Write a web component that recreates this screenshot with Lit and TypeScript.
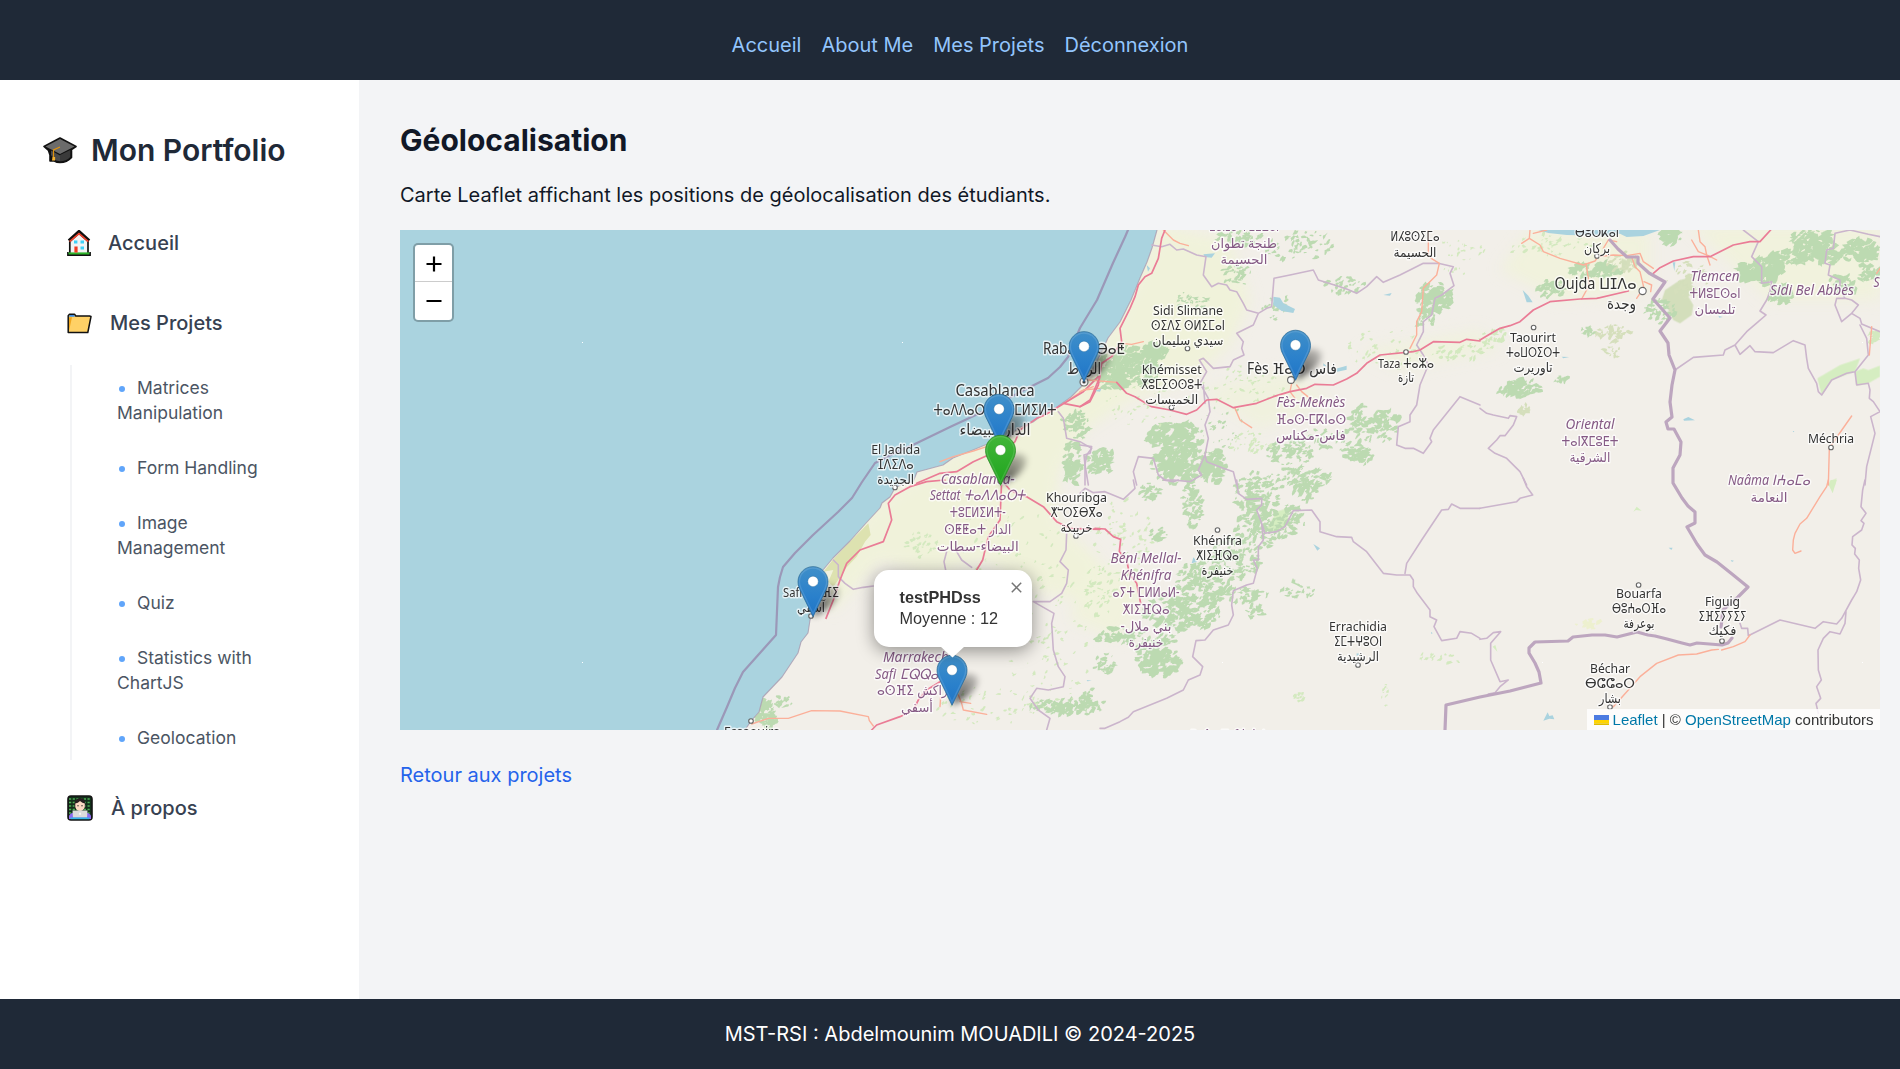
import { LitElement, html, svg, css } from "lit";
import { customElement } from "lit/decorators.js";

interface Tile {
  x: number;
  y: number;
  admin?: string;
  trunk?: string;
  motorway?: string;
  water?: string;
  park?: string;
  sand?: string;
  scrub?: string;
}

/* Vector data per map tile, three units to one map pixel. */
const TILES: Tile[] = [
  {
    x: 700, y: 225,
    admin: "M1075 560L1090 580 1100 640 1140 650 1175 670 1160 690 1155 720 1165 780",
    trunk: "M1200 490L1150 495 1100 530M860 665L820 678 760 695 720 710",
    motorway: "M1195 455L1150 500 1100 530 1035 570 1010 580 960 615 945 650 900 690 865 690 820 710 770 740 720 745 650 775M1200 450L1195 480 1170 530 1140 545 1090 535",
  },
  {
    x: 700, y: 480,
    admin: "M400 240L415 255 415 290 435 310 460 328 490 322 520 318M740 215L732 245 737 270M770 215L785 240 815 262M1100 160L1098 210 1080 245 1105 270 1100 310 1085 340 1050 365 1000 365M1000 365L1062 400 1055 430 1060 510 1075 560 1095 590 1090 620 1045 630 1010 625 990 655 1015 690 1050 715 1040 750",
    trunk: "M155 732L205 715 265 715 335 692 420 693 505 710 508 722 520 738M720 680L722 650M775 645L785 670 790 690 860 703M780 665L812 670",
    motorway: "M735 0L680 5 630 20 585 45 565 70 575 120 550 185 480 210 440 250 420 300 400 360 378 415M905 0L930 30 960 45 980 50 1030 80 1070 125 1110 145 1200 148M905 0L900 120 865 170 848 240 830 270M720 605L680 630 655 660 640 690 600 710 530 735 515 750",
    sand: "M505 130L512 165 495 185 470 230 440 262 425 285 400 320 385 305 400 270 370 275 400 238 440 195Z",
  },
  {
    x: 1080, y: 225,
    admin: "M215 60L245 65 270 58 290 75 310 72 350 90 378 95 370 150 395 185 415 175 440 180 450 195 470 200 490 235 500 255 535 265 560 250 575 245 582 160 630 150 700 135 715 165 780 185 800 192 830 205 860 185 890 155 910 172 960 150 1030 115 1075 115 1120 125 1110 145 1122 182 1085 210 1065 220 1055 270 1030 290 1030 320 1010 360 1030 390 1045 420 1020 480 1010 540 990 570 990 590 955 605 950 660 975 670 1000 670 1030 685 1055 650 1050 640 1060 615 1140 515 1200 540M535 265L520 300 470 325 490 350 485 370 492 390 460 405 450 425 400 430 370 400 358 405 380 440 360 475 385 520 390 560 375 600 385 640 375 690 380 710 430 730 460 740 470 780M0 660L35 665 30 685 12 690 15 720 15 780M170 780L160 740 175 695 220 700 235 750 255 765 280 765 330 770 365 750 355 735 375 690M370 480L375 535",
    trunk: "M250 15L280 45 300 55 325 62M125 355L155 358 190 350M25 465L110 472M1045 15L1045 95 1078 115 1070 150 1030 190 1025 260 1010 290 1010 330 990 370M635 475L630 500 645 520M650 480L665 500 720 545M465 550L480 585 515 608M0 500L40 485",
    motorway: "M255 15L245 40 235 100 215 145 195 155 175 180 165 215 150 250 120 310 125 350 95 395 65 415 58 460 30 525 0 545M110 472L140 505 165 515 215 545 270 555 320 568 350 555 365 540 380 525 410 523 460 548 530 535 580 515 630 500 680 490 705 478 760 480 800 462 830 445 860 415 900 390 1000 380 1020 375 1060 350 1140 352 1160 343 1200 348",
    water: "M580 215L600 218 610 235 645 252 640 264 605 258 580 240ZM765 432L800 422 800 434 772 440ZM370 88L405 85 395 98 375 96ZM910 210L935 204 930 212ZM45 498L65 490 60 500ZM200 120L210 130 204 140ZM730 415L742 425 730 422Z",
  },
  {
    x: 1080, y: 480,
    admin: "M0 40L15 25 40 38 75 35 130 58 165 25 160 0M470 0L475 40 500 58 545 55 545 75 530 90 545 130 555 160 590 155 615 140 640 92 695 90 720 125 720 155 770 170 815 172 820 185 860 215 910 280 950 285 990 285 1000 300 1000 320 1012 340 1050 390 1050 410 1070 420 1062 440 1085 482 1130 475 1140 455 1175 460 1200 475M975 280L980 250 1025 180 1085 90 1105 88 1115 72 1140 85 1200 85M545 130L550 180 535 200 535 240 520 240 532 265 520 310 500 315 460 332 455 375 460 405 445 435 400 450 375 480 348 482 338 530 368 560 360 585 325 600 310 630 260 655 160 695 145 712 120 725 75 745 60 745M250 0L280 5 295 0",
    motorway: "M45 145L75 147 100 170 122 178 118 215 140 240 145 265 150 285 170 310 182 370",
    water: "M340 232L352 245 335 250ZM700 192L720 205 712 212ZM20 600L35 602 22 604ZM830 520L842 522 830 528ZM1053 455L1058 460 1054 462Z",
    park: "M590 95L620 85 625 120 615 145 570 160 560 145Z",
  },
  {
    x: 1480, y: 225,
    admin: "M790 15L835 50 815 95 845 125 845 175 875 170 870 200 860 225 840 258 858 270 835 290 800 320 765 360 780 388 810 362 825 380 880 383 940 347 975 360 980 400 985 430 1010 475 1015 500 1025 510M765 360L735 375 730 390 640 397 585 435M1200 35L1165 28 1110 15 1065 25 1060 70 1040 75 1035 115 1050 120 1045 150 1080 165 1080 190 1095 220 1115 225 1135 240 1115 265 1085 290 1065 240 1070 220 1095 220M1115 265L1140 280 1145 297 1200 320M1140 300L1160 340 1165 390 1125 440 1130 480 1165 475 1170 495 1168 520 1180 530 1200 560 1172 575 1185 625 1160 725 1155 780M1025 510L1055 465 1100 445 1125 440M0 550L20 565 40 570 85 580 90 572 110 575 100 600 75 632 60 632 50 645 25 670 45 685 80 700 120 740 140 780",
    trunk: "M150 15L148 40 125 55M148 40L180 60 190 80 240 100 310 120 345 108 355 95 400 90 440 92 480 85 490 110 520 130M160 25L200 15M318 115L328 180 305 222M455 95L465 125 480 140 492 190M655 15L660 50 675 65 680 90 690 120M635 45L655 80 685 92 710 105M492 170L515 180 512 200M480 205L470 220M1175 305L1168 390M1200 130L1190 145M1115 573L1075 630 1048 670 1045 780M370 70L385 45 410 50",
    motorway: "M0 345L25 330 60 310 90 302 120 290 160 255 210 230 300 222 350 220 445 198M520 145L540 128 580 108 640 95 690 95 760 60 810 50 840 50 872 15",
    water: "M175 15L205 24 260 30 390 32 420 26 440 36 490 33 540 15ZM610 583L625 576 645 586 612 587ZM128 195L145 212 158 232 140 232ZM245 395L268 396 250 400ZM578 112L586 112 583 138ZM715 272L728 276 718 278ZM938 618L943 618 941 622Z",
    park: "M1012 460L1080 420 1140 400 1125 440 1055 465 1025 510ZM1125 440L1150 430 1165 435 1200 422 1200 455 1165 475 1130 482ZM1048 780L1050 768 1070 760 1065 780Z",
    scrub: "M555 195L600 165 640 155 630 175 650 195 625 215 640 240 635 270 600 295 580 285 560 245 545 225ZM425 100L450 110 445 135 425 135Z",
  },
  {
    x: 1480, y: 480,
    admin: "M130 -5L140 20 158 45 120 55 110 65 0 85M0 478L20 475 40 458 62 455 32 490 32 540 60 605 85 600 60 620 45 638 25 642M1155 0L1148 30 1143 80 1158 100 1143 122 1152 130 1145 150 1118 170 1116 195 1126 205 1124 222 1138 240 1136 265 1142 300 1130 335 1115 360 1085 415 1070 432 1030 425 1005 445 900 420 805 467 803 445 785 445 780 430M1098 395L1095 430 1080 462 1050 455 1030 475 1014 510 1015 570 1024 600 1010 620 1022 655 1008 670 1015 700",
    trunk: "M1045 0L1040 20 1020 50 980 115 960 132 945 160 940 180 938 210 945 220 963 213M810 465L795 485 760 500 725 510M715 508L695 510 650 522 595 525 530 550 480 590 445 630 400 680",
    water: "M190 722L203 697 208 708 218 706 223 718 208 716ZM566 203L578 203 574 210ZM752 240L762 242 756 246Z",
    park: "M1046 15L1052 0 1070 0 1058 40ZM460 95L470 80 485 92 468 90ZM38 500L46 495 52 515Z",
  },
];

const COAST =
  "M1157 230L1152 248 1147 262 1140 278 1131 300 1120 322 1108 338 1100 355 1091 373 1083 385 1071 397 1057 407 1045 413 1033 422 1018 428 1008 438 985 445 973 450 953 458 943 465 917 472 913 482 904 483 895 488 890 497 882 503 880 508 867 522 850 541 833 558 823 570 812 588 809 604 813 612 810 620 808 633 801 642 798 653 782 677 763 697 759 712 751 721 745 730";

const SEA_LIMIT =
  "M1128 230L1125 237 1113 263 1097 300 1080 328 1068 357 1060 367 1048 378 1030 387 1005 400 980 413 950 427 917 443 893 454 875 463 862 482 852 498 838 512 813 535 795 553 783 567 780 577 778 587 776 635 743 672 735 688 727 707 717 730";

const FRONTIER =
  "M1610 240L1618 249 1627 257 1638 257 1638 263 1649 273 1665 282 1653 299 1670 318 1660 331 1668 343 1669 355 1675 370 1672 385 1670 402 1672 417 1666 422 1668 429 1674 429 1681 442 1680 455 1673 468 1673 483 1682 498 1688 506 1695 512 1695 523 1687 527 1697 544 1705 555 1717 562 1732 574 1748 587 1738 597 1723 610 1721 627M1732 638L1728 643 1722 645 1697 643 1690 645 1682 643 1667 639 1655 636 1648 635 1637 632 1617 637 1605 635 1592 635 1573 637 1568 641 1535 642 1529 648 1529 653 1535 663 1539 672 1541 683 1510 691 1480 697 1446 705 1445 730";

type Cluster = [number, number, number, number, number, number, string];
const F = "#bcdab1";
const P = "#d3e9bf";
const S = "#d5dfbc";
/* cx, cy, rx, ry, count, size, colour */
const CLUSTERS: Cluster[] = [
  [1128, 368, 28, 18, 70, 5, F], [1112, 380, 14, 10, 20, 5, F], [1150, 352, 16, 8, 25, 5, F],
  [1242, 238, 22, 7, 20, 4, F], [1236, 275, 14, 9, 15, 3.5, F], [1192, 300, 14, 9, 12, 3, F],
  [1300, 246, 32, 14, 24, 3.5, F], [1345, 286, 18, 8, 14, 3.5, F], [1275, 305, 14, 14, 12, 2.5, F],
  [1434, 298, 16, 14, 34, 5, F], [1425, 318, 9, 9, 12, 4, F], [1460, 255, 22, 18, 12, 2.5, P],
  [1174, 438, 24, 14, 54, 5, F], [1180, 465, 26, 17, 66, 5, F], [1212, 466, 12, 16, 30, 5, F],
  [1101, 462, 14, 11, 26, 4.5, F], [1073, 463, 8, 20, 34, 4.5, F], [1076, 425, 12, 14, 22, 4, F],
  [1290, 452, 22, 12, 34, 3.5, F], [1372, 424, 24, 18, 40, 4.6, F], [1360, 455, 13, 9, 18, 4.5, F],
  [1330, 440, 34, 10, 20, 3.2, F], [1250, 442, 20, 10, 16, 2.6, P],
  [1300, 478, 28, 10, 40, 3.5, F], [1256, 497, 20, 22, 60, 3.6, F], [1305, 490, 12, 10, 22, 4, F],
  [1262, 528, 24, 18, 56, 3.6, F], [1292, 520, 12, 14, 20, 4, F], [1192, 505, 10, 20, 34, 3.6, F],
  [1150, 492, 9, 8, 14, 3.5, F], [1158, 535, 9, 6, 10, 3.5, F], [1236, 558, 22, 20, 50, 3.6, F],
  [1205, 582, 28, 19, 64, 4, F], [1182, 612, 36, 17, 76, 4.4, F], [1160, 655, 22, 20, 52, 5, F],
  [1120, 636, 24, 8, 26, 4, F], [1248, 595, 18, 7, 16, 4, F], [1255, 612, 8, 6, 9, 3.5, F],
  [1105, 664, 10, 10, 14, 3, F], [1090, 702, 12, 12, 16, 4, F], [1062, 706, 28, 7, 40, 4, F],
  [1295, 592, 18, 10, 9, 3, F], [1120, 540, 30, 40, 34, 2.8, P], [1100, 590, 16, 24, 22, 2.6, P],
  [766, 715, 8, 13, 22, 4.5, F], [783, 701, 9, 5, 10, 3, F], [920, 545, 18, 12, 14, 2.8, P],
  [1050, 640, 40, 60, 34, 2.6, P], [990, 705, 50, 18, 24, 2.6, P], [1010, 545, 60, 30, 26, 2.2, P],
  [1150, 405, 40, 20, 18, 2.4, P], [1240, 385, 40, 20, 24, 2.4, P], [1222, 425, 20, 22, 14, 2.2, F],
  [1390, 350, 40, 20, 22, 2.4, P], [1460, 352, 24, 8, 16, 3, P], [1493, 338, 12, 10, 14, 3.4, P],
  [1550, 245, 40, 10, 20, 2.6, P], [1597, 270, 24, 7, 38, 4, F], [1552, 288, 14, 7, 20, 4, F],
  [1622, 262, 14, 9, 18, 3.5, S], [1660, 310, 14, 12, 22, 3.5, F], [1690, 282, 22, 18, 22, 3.5, S],
  [1671, 235, 10, 7, 20, 5, F], [1762, 270, 19, 12, 36, 6, F], [1788, 258, 18, 6, 20, 4.5, F],
  [1812, 240, 20, 9, 34, 5, F], [1822, 254, 36, 8, 40, 5, F], [1862, 250, 16, 10, 30, 5, F],
  [1780, 295, 12, 8, 20, 5, F], [1845, 284, 16, 9, 20, 4.5, F], [1868, 272, 10, 8, 14, 4, F],
  [1519, 388, 20, 8, 26, 4.5, F], [1615, 333, 18, 8, 14, 3.6, S], [1590, 330, 8, 5, 8, 3, F],
  [1523, 410, 6, 5, 7, 4, S], [1612, 352, 8, 5, 6, 3, S], [1560, 380, 8, 4, 6, 3, F],
  [1440, 658, 24, 6, 8, 2.6, P], [1300, 697, 8, 4, 6, 3, P], [1385, 695, 3, 10, 5, 2, P],
  [1590, 624, 12, 4, 8, 3.4, "#edf0cf"], [1875, 337, 6, 4, 8, 4, P],
];

function speckle(clusters: Cluster[]) {
  let seed = 20241;
  const rnd = () => {
    seed = (seed * 1103515245 + 12345) % 2147483648;
    return seed / 2147483648;
  };
  return clusters.map(([cx, cy, rx, ry, n, size, fill]) => {
    let d = "";
    for (let i = 0; i < n * 2.1; i++) {
      const a = rnd() * Math.PI * 2;
      const r = Math.pow(rnd(), 0.62) * 1.12;
      const x = cx + Math.cos(a) * rx * r;
      const y = cy + Math.sin(a) * ry * r;
      const tilt = -0.5 + (rnd() - 0.5) * 1.6;
      const c = Math.cos(tilt);
      const s = Math.sin(tilt);
      const base = size * (0.3 + rnd() * 0.6);
      const k = 8;
      for (let j = 0; j < k; j++) {
        const t = (j / k) * Math.PI * 2;
        const q = base * (0.35 + rnd() * 0.95);
        const ux = Math.cos(t) * q * 1.45;
        const uy = Math.sin(t) * q * 0.75;
        d += `${j ? "L" : "M"}${(x + ux * c - uy * s).toFixed(1)} ${(y + ux * s + uy * c).toFixed(1)}`;
      }
      d += "Z";
    }
    return svg`<path d=${d} fill=${fill}/>`;
  });
}

/* centre x, baseline, width, text, kind: c city, t town, r italic region, rn upright region */
type Label = [number, number, number, string, string];
const LABELS: Label[] = [
  [1084, 354, 82, "Rabat ⵔⴱⴰⵟ", "c"], [1084, 374, 34, "الرباط", "c"],
  [995, 395.5, 79, "Casablanca", "c"], [995, 414.5, 123, "ⵜⴰⴷⴷⴰⵔⵜ ⵜⵓⵎⵍⵉⵍⵜ", "c"], [995, 434.5, 71, "الدار البيضاء", "c"],
  [895.7, 453.5, 49, "El Jadida", "t"], [895.7, 469, 36, "ⵊⴷⵉⴷⴰ", "t"], [895.7, 483.5, 37, "الجديدة", "t"],
  [977.7, 484, 74, "Casablanca-", "r"], [977.7, 500, 96, "Settat ⵜⴰⴷⴷⴰⵔⵜ", "r"], [977.7, 517, 56, "ⵜⵓⵎⵍⵉⵍⵜ-", "rn"],
  [977.7, 534, 67, "ⵙⵟⵟⴰⵜ الدار", "rn"], [977.7, 551, 82, "البيضاء-سطات", "rn"],
  [1076.5, 502, 61, "Khouribga", "t"], [1076.5, 517, 52, "ⵅⵯⵔⵉⴱⴳⴰ", "t"], [1076.5, 532, 32, "خريبكة", "t"],
  [811, 597, 56, "Safi ⴰⵙⴼⵉ", "t"], [811, 612, 28, "آسفي", "t"],
  [918, 662, 70, "Marrakech-", "r"], [918, 678.5, 86, "Safi ⵎⵕⵕⴰⴽⵛ-", "r"], [918, 695, 82, "ⴰⵙⴼⵉ مراكش-", "rn"], [917, 712, 32, "أسفي", "rn"],
  [752, 736, 56, "Essaouira", "t"],
  [1244, 231, 70, "ⵟⴰⵏⵊⴰ-ⵜⵉⵟⵡⴰⵏ", "rn"], [1244, 248, 66, "طنجة تطوان", "rn"], [1244, 264, 47, "الحسيمة", "rn"],
  [1415, 241, 49, "ⵍⵃⵓⵙⵉⵎⴰ", "t"], [1415, 257, 43, "الحسيمة", "t"],
  [1188, 314.5, 70, "Sidi Slimane", "t"], [1188, 329.5, 74, "ⵙⵉⴷⵉ ⵙⵍⵉⵎⴰⵏ", "t"], [1188, 344.5, 71, "سيدي سليمان", "t"],
  [1171.7, 373.5, 60, "Khémisset", "t"], [1171.7, 388.5, 61, "ⵅⵓⵎⵉⵙⵙⵓⵜ", "t"], [1171.7, 403.5, 53, "الخميسات", "t"],
  [1292, 374, 90, "Fès ⴼⴰⵙ فاس", "c"],
  [1311, 407, 69, "Fès-Meknès", "r"], [1311, 424, 70, "ⴼⴰⵙ-ⵎⴽⵏⴰⵙ", "rn"], [1311, 440, 70, "فاس-مكناس", "rn"],
  [1406, 367.5, 56, "Taza ⵜⴰⵣⴰ", "t"], [1406, 382, 16, "تازة", "t"],
  [1217.5, 545, 49, "Khénifra", "t"], [1217.5, 560, 43, "ⵅⵏⵉⴼⵕⴰ", "t"], [1217.5, 575, 32, "خنيفرة", "t"],
  [1146, 563, 71, "Béni Mellal-", "r"], [1146, 580, 51, "Khénifra", "r"], [1146, 597, 67, "ⴰⵢⵜ ⵎⵍⵍⴰⵍ-", "rn"],
  [1146, 614, 47, "ⵅⵏⵉⴼⵕⴰ", "rn"], [1146, 630.5, 51, "بني ملال-\u200f", "rn"], [1146, 647, 35, "خنيفرة", "rn"],
  [1358, 631, 58, "Errachidia", "t"], [1358, 646, 48, "ⵉⵎⵜⵖⵓⵔⵏ", "t"], [1358, 661, 42, "الرشيدية", "t"],
  [1227, 740, 76, "Drâa-Tafilalet", "r"],
  [1597, 237, 44, "ⴱⵓⵔⴽⴰⵏ", "t"], [1597, 253, 26, "بركان", "t"],
  [1595.5, 289, 82, "Oujda ⵡⵊⴷⴰ", "c"], [1621.5, 308.5, 29, "وجدة", "c"],
  [1533, 342, 46, "Taourirt", "t"], [1533, 357, 54, "ⵜⴰⵡⵔⵉⵔⵜ", "t"], [1533, 371.500, 39, "تاوريرت", "t"],
  [1715, 280.5, 49, "Tlemcen", "r"], [1715, 297.500, 51, "ⵜⵍⵓⵎⵙⴰⵏ", "rn"], [1715, 314, 41, "تلمسان", "rn"],
  [1812, 295, 84, "Sidi Bel Abbès", "r"], [1885, 287, 23, "Saïd", "r"],
  [1590, 429, 49, "Oriental", "r"], [1590, 446, 57, "ⵜⴰⵏⴳⵎⵓⴹⵜ", "rn"], [1590, 462, 41, "الشرقية", "rn"],
  [1831, 442.500, 46, "Méchria", "t"],
  [1769, 485, 82, "Naâma ⵏⵄⴰⵎⴰ", "r"], [1769, 501.500, 37, "النعامة", "rn"],
  [1639, 598, 46, "Bouarfa", "t"], [1639, 613, 54, "ⴱⵓⵄⴰⵔⴼⴰ", "t"], [1639, 628, 31, "بوعرفة", "t"],
  [1722.5, 606, 35, "Figuig", "t"], [1722.5, 621, 48, "ⵉⴼⵉⵢⵢⵉⵢ", "t"], [1722.5, 635, 28, "فكيك", "t"],
  [1610, 673, 40, "Béchar", "t"], [1610, 688, 50, "ⴱⵛⵛⴰⵔ", "t"], [1610, 702.500, 22, "بشار", "t"],
];

const TOWNS: [number, number, number][] = [
  [1084, 382, 4], [895, 487.5, 2.3], [1076, 536, 2.3], [811, 616, 2.3], [751, 721, 2.3], [1187.5, 348.5, 2.3],
  [1171.5, 407.5, 2.3], [1291, 380, 3.4], [1406, 352, 2.3], [1217.5, 530, 2.3], [1358, 665, 2.3], [1597, 256, 2.3],
  [1642.6, 291, 3.6], [1533.6, 327.5, 2.3], [1831, 447.5, 2.3], [1638.6, 585, 2.3], [1722, 641, 2.3], [1610, 707, 2.3],
];

/* x, y of the pin's tip */
const PINS: [number, number, boolean][] = [
  [1084, 382, false], [1295.5, 380.6, false], [999, 444.6, false], [1000.5, 485.6, true], [813, 617, false], [952, 705.6, false],
];

const SEAMS = [582, 902, 1222, 1542, 1862].flatMap((x) => [342, 662].map((y) => [x, y]));

@customElement("student-map")
class StudentMap extends LitElement {
  static styles = css`
    :host { display: block; position: relative; height: 500px; overflow: hidden; background: #aad3df;
      font-family: "Liberation Sans", Arial, sans-serif; }
    .canvas { display: block; width: 1480px; height: 500px; }
    .line { fill: none; stroke-linejoin: round; stroke-linecap: round; vector-effect: non-scaling-stroke; }
    .admin { stroke: #cbb5cc; stroke-width: 1.6px; }
    .trunk { stroke: #fbb09a; stroke-width: 1.4px; }
    .motorway { stroke: #ea7c96; stroke-width: 1.7px; }
    .label { font-family: "Noto Sans", "DejaVu Sans", sans-serif; text-anchor: middle; paint-order: stroke;
      stroke: rgba(255, 255, 255, 0.7); stroke-width: 3px; stroke-linejoin: round; fill: #333; }
    .c { font-size: 15.5px; }
    .t { font-size: 13.3px; }
    .r { font-size: 14px; font-style: italic; fill: #855a85; }
    .rn { font-size: 13.5px; fill: #855a85; }
    .zoom { position: absolute; left: 13px; top: 13px; width: 37px; border: 2px solid rgba(0, 0, 0, 0.25);
      border-radius: 5px; background-clip: padding-box; background-color: #fff; display: flex; flex-direction: column; }
    .zoom-btn { height: 38px; display: flex; align-items: center; justify-content: center; }
    .zoom-btn:first-child { height: 36px; padding-top: 1px; box-sizing: border-box; }
    .zoom-btn + .zoom-btn { border-top: 1px solid #ccc; }
    .popup { position: absolute; left: 473.500px; top: 339.5px; width: 158px; height: 77px; box-sizing: border-box;
      padding: 17.5px 26px; border-radius: 15px; background: #fff; color: #333; font-size: 16.25px; line-height: 21.1px;
      box-shadow: 0 4px 17px rgba(0, 0, 0, 0.4); white-space: nowrap; }
    .popup strong { display: block; }
    .tip { position: absolute; left: 66px; top: 76.500px; width: 25px; height: 12px; }
    .close { position: absolute; right: 10px; top: 12px; width: 11px; height: 11px; }
    .credit { position: absolute; right: 0; bottom: 0; height: 21px; padding: 0 6.5px; display: flex; align-items: center;
      gap: 4px; background: rgba(255, 255, 255, 0.8); color: #333; font-size: 15px; line-height: 21px; white-space: pre; }
    .credit a { color: #0078a8; }
    .flag { width: 15px; height: 10px; }
  `;

  private tile(t: Tile) {
    return svg`<g transform="translate(${t.x} ${t.y}) scale(0.33333)">
      <path d=${t.water ?? ""} fill="#aad3df"/>
      <path d=${t.admin ?? ""} class="line admin"/>
      <path d=${t.trunk ?? ""} class="line trunk"/>
      <path d=${t.motorway ?? ""} class="line motorway"/>
    </g>`;
  }

  private ground(t: Tile) {
    return svg`<g transform="translate(${t.x} ${t.y}) scale(0.33333)">
      <path d=${t.park ?? ""} fill="#d5edc1"/>
      <path d=${t.sand ?? ""} fill="#dde2b0"/>
      <path d=${t.scrub ?? ""} fill="#d3debb"/>
    </g>`;
  }

  private pin([x, y, green]: [number, number, boolean]) {
    return svg`<g transform="translate(${x - 15.6} ${y - 51}) scale(1.25)">
      <path d="M12.5 .5C5.9 .5 .5 5.9 .5 12.6c0 3.1 1 5.6 2.6 8.5L12.5 40.6l9.4-19.5c1.6-2.9 2.6-5.4 2.6-8.5C24.5 5.9 19.1 .5 12.5 .5Z"
        fill=${green ? "url(#pinGreen)" : "url(#pinBlue)"} stroke=${green ? "#2c8a25" : "#2e6c97"} stroke-opacity="0.75" stroke-width="0.8"/>
      <path d="M12.5 1.6C6.5 1.6 1.6 6.5 1.6 12.6c0 2.8 1 5.2 2.5 8L12.5 38l8.4-17.4c1.5-2.8 2.5-5.2 2.5-8C23.4 6.5 18.5 1.6 12.5 1.6Z"
        fill="none" stroke="#fff" stroke-opacity="0.12" stroke-width="1.1"/>
      <circle cx="12.5" cy="12.3" r="4.2" fill="#fff" stroke=${green ? "#2c8a25" : "#2e6c97"} stroke-opacity="0.5" stroke-width="0.6"/>
    </g>`;
  }

  render() {
    return html`
      <svg class="canvas" viewBox="400 230 1480 500">
        <defs>
          <linearGradient id="pinBlue" x1="0" y1="0" x2="0" y2="1">
            <stop offset="0" stop-color="#3f8fc9"/><stop offset="0.6" stop-color="#2a80cb"/><stop offset="1" stop-color="#1f74c6"/>
          </linearGradient>
          <linearGradient id="pinGreen" x1="0" y1="0" x2="0" y2="1">
            <stop offset="0" stop-color="#42b53a"/><stop offset="1" stop-color="#1ea51c"/>
          </linearGradient>
          <linearGradient id="cast" x1="0" y1="1" x2="0.8" y2="0">
            <stop offset="0" stop-color="#000" stop-opacity="0.75"/><stop offset="1" stop-color="#000" stop-opacity="0.2"/>
          </linearGradient>
          <clipPath id="land"><path d="${COAST}L1880 730 1880 230Z"/></clipPath>
          <filter id="wash" x="-20%" y="-20%" width="140%" height="140%"><feGaussianBlur stdDeviation="7"/></filter>
          <filter id="soft"><feGaussianBlur stdDeviation="0.6"/></filter>
          <filter id="shade" x="-50%" y="-50%" width="200%" height="200%"><feGaussianBlur stdDeviation="3"/></filter>
        </defs>
        <rect x="400" y="230" width="1480" height="500" fill="#aad3df"/>
        <path d="${COAST}L1880 730 1880 230Z" fill="#f2efe9"/>
        <g clip-path="url(#land)">
          <g filter="url(#wash)" fill="#f0f2da">
            <path d="M1160 225L1230 240 1250 300 1230 345 1190 380 1130 400 1085 430 1060 470 1055 520 1100 560 1085 600 1030 590 985 560 930 575 880 560 835 610 812 600 830 555 880 500 960 450 1090 370Z"/>
            <path d="M1085 560L1150 580 1120 640 1070 620Z" opacity="0.8"/>
            <path d="M1200 390L1290 370 1330 400 1260 430Z" opacity="0.7"/>
            <path d="M1530 230L1650 230 1650 290 1560 300 1500 270Z" opacity="0.8"/>
            <path d="M1690 225L1880 225 1880 300 1770 300Z" opacity="0.8"/>
            <path d="M1360 350L1480 330 1500 350 1400 370Z" opacity="0.7"/>
          </g>
          <g filter="url(#soft)">
            ${TILES.map((t) => this.ground(t))}
            ${speckle(CLUSTERS)}
          </g>
        </g>
        <path d=${COAST} class="line" stroke="#a99bb0" stroke-width="1.1" opacity="0.8"/>
        <path d=${SEA_LIMIT} class="line" stroke="#9b98b8" stroke-width="2.2"/>
        ${TILES.map((t) => this.tile(t))}
        <path d=${FRONTIER} class="line" stroke="#bda6bf" stroke-width="3.2"/>
        ${TOWNS.map(([x, y, r]) => svg`<circle cx=${x} cy=${y} r=${r} fill="#fff" stroke="#666" stroke-width="1.1"/>`)}
        <circle cx="1084" cy="382" r="1.6" fill="#444"/>
        ${LABELS.map(([x, y, w, text, kind]) => svg`<text x=${x} y=${y} textLength=${w} lengthAdjust="spacingAndGlyphs" class="label ${kind}">${text}</text>`)}
        ${SEAMS.map(([x, y]) => svg`<rect x=${x} y=${y} width="1" height="1" fill="#fff"/>`)}
        ${PINS.map(([x, y]) => svg`<path d="M${x} ${y}L${x + 7} ${y - 26}Q${x + 16} ${y - 36} ${x + 25} ${y - 29}Q${x + 29} ${y - 20} ${x + 14} ${y - 8}Z" fill="url(#cast)" filter="url(#shade)"/>`)}
        ${PINS.map((p) => this.pin(p))}
      </svg>
      <div class="zoom">
        <div class="zoom-btn"><svg width="16" height="16" viewBox="0 0 16 16"><path d="M8 .5v15M.5 8h15" stroke="#000" stroke-width="2.2"/></svg></div>
        <div class="zoom-btn"><svg width="16" height="16" viewBox="0 0 16 16"><path d="M.5 8h15" stroke="#000" stroke-width="2"/></svg></div>
      </div>
      <div class="popup">
        <strong>testPHDss</strong>Moyenne : 12
        <svg class="close" viewBox="0 0 11 11"><path d="M.8 .8l9.4 9.4M10.2 .8L.8 10.2" stroke="#757575" stroke-width="1.5"/></svg>
        <svg class="tip" viewBox="0 0 25 12"><path d="M0 0h25L12.5 11.5Z" fill="#fff"/></svg>
      </div>
      <div class="credit"><svg class="flag" viewBox="0 0 15 10"><path fill="#4C7BE1" d="M0 0h15v5H0z"/><path fill="#FFD500" d="M0 5h15v3.4H0z"/><path fill="#E0BC00" d="M0 8.4h15V10H0z"/></svg><span><a>Leaflet</a> | © <a>OpenStreetMap</a> contributors</span></div>
    `;
  }
}

const capIcon = html`<svg class="cap" viewBox="0 0 34 27">
  <path d="M17 1L33 9.5 28.5 12.5V20.5Q24 25.5 17 25.5 13.5 25.5 11.5 24H7V18L5.5 13.5 1 9.5Z" fill="#111" stroke="#111" stroke-width="1.6" stroke-linejoin="round"/>
  <path d="M8 13.5L17 18.5V24.3Q12.5 24 11 22.3L8 18Z" fill="#4a4a4a"/><path d="M17 18L27.3 13V20Q23 24.3 17 24.3Z" fill="#3a3a3a"/>
  <path d="M17 2L31.5 9.5 17 17 2.5 9.5Z" fill="#6b6b6b"/>
  <path d="M17 10L10.5 13V21" fill="none" stroke="#e0920c" stroke-width="1.2"/><path d="M9.5 20h2.6v3.4H9z" fill="#f5b02e"/></svg>`;
const homeIcon = html`<svg class="home" viewBox="0 0 24 26">
  <path d="M2.8 10.5V24H21V10.5L12 2.5Z" fill="#f3f3f3" stroke="#111" stroke-width="1.7"/>
  <path d="M2 10.8L12 1.8 22 10.8" fill="none" stroke="#111" stroke-width="3.6"/><path d="M2.6 11.6L12 3.6 21.4 11.6" fill="none" stroke="#f0442e" stroke-width="1.7"/>
  <path d="M.8 22.4h22.4V25.2H.8z" fill="#2fb42a"/><path d="M.8 22V25.200H23.200V22" fill="none" stroke="#111" stroke-width="1.4"/>
  <path d="M7.4 16.5h3.2v6H7.4z" fill="#f23a22"/><path d="M7 10.4h3.4v3H7zM13.5 10.4H17v3h-3.5zM13.5 16.4H17v3.2h-3.5z" fill="#3fd0f7"/></svg>`;
const folderIcon = html`<svg class="folder" viewBox="0 0 25 21">
  <path d="M1.2 19.5V2.8L2.5 1.2H7.5L8.8 3H22.5L24 3.5 20.8 19.5Z" fill="#ffd166" stroke="#111" stroke-width="1.5" stroke-linejoin="round"/>
  <path d="M2.2 3L3 2H7L8 3.8H2.2Z" fill="#3b8ee8"/><path d="M2 4.2H5L2 18Z" fill="#f0a51c"/></svg>`;
const coderIcon = html`<svg class="coder" viewBox="0 0 26 26">
  <rect x="1" y="1" width="24" height="24" rx="3" fill="#12301a" stroke="#151515" stroke-width="1.6"/>
  <path d="M2 4h22M2 7.5h22M2 11h22M2 14.5h22M2 18h22" stroke="#4fae55" stroke-width="1.5" stroke-dasharray="2.2 1.5"/>
  <path d="M2 24V20.5Q4 17.5 8 17.5H18Q22 17.5 24 20.5V24Z" fill="#8f6cf0"/>
  <path d="M7.5 8Q8 3.5 13.5 3 18.5 3.5 18.5 9V13H7.5Z" fill="#262020"/>
  <path d="M8.3 8.5Q11 8 13 6 15.5 8.3 17.8 8.5V12Q16.5 16 13 16 9.5 16 8.3 12Z" fill="#fbd9c2"/>
  <circle cx="11" cy="10.8" r=".7" fill="#333"/><circle cx="15" cy="10.8" r=".7" fill="#333"/>
  <path d="M5.5 15.5H20.5L20 22.5H6Z" fill="#dcdcdc"/><path d="M12 17.8h2v2h-2z" fill="#f6f6f6"/><path d="M3.5 22.5H22.5V24.2H3.5Z" fill="#35b8e8"/></svg>`;

@customElement("app-root")
class AppRoot extends LitElement {
  static styles = css`
    :host { display: grid; grid-template: 80px 919px 70px / 359px 1fr; height: 1069px;
      font-family: Inter, sans-serif; font-size: 20px; line-height: 30px; color: #111827; background: #f3f4f6; }
    .top { grid-column: 1 / 3; background: #1f2937; display: flex; justify-content: center; align-items: center;
      gap: 20px; padding: 10px 0 0 20px; box-sizing: border-box; color: #93c5fd; }
    .side { background: #fff; padding: 49px 0 0 43px; }
    .brand { display: flex; align-items: center; height: 42px; gap: 14px; color: #1f2937; font-size: 30px; font-weight: 600; white-space: nowrap; }
    .cap { width: 34px; height: 27px; }
    .menu { margin-top: 42px; padding-left: 24px; display: flex; flex-direction: column; }
    .entry { display: flex; align-items: center; height: 60px; font-weight: 500; color: #374151; }
    .entry + .entry { margin-top: 20px; }
    .home { width: 24px; height: 26px; margin-right: 17px; }
    .folder { width: 25px; height: 21px; margin-right: 18px; }
    .coder { width: 26px; height: 26px; margin-right: 18px; }
    .sub { margin: 12px 0 18px 3px; padding: 0 0 0 45px; border-left: 2px solid #f3f4f6; list-style: none;
      display: flex; flex-direction: column; gap: 10px; font-size: 17.5px; line-height: 25px; color: #4b5563; }
    .sub li { width: 155px; padding: 10px 0; }
    .dot { display: inline-block; width: 6px; height: 6px; margin: 0 12px 2px 2px; border-radius: 50%; background: #60a5fa; }
    .main { padding: 40px 20px 0 41px; }
    .title { margin: 0; font-size: 30px; line-height: 40px; font-weight: 700; }
    .lead { margin: 20px 0; }
    .back { display: block; margin-top: 30px; color: #2563eb; }
    .foot { grid-column: 1 / 3; background: #1f2937; color: #fff; display: flex; justify-content: center; align-items: center; padding-left: 20px; }
  `;

  private items = ["Matrices Manipulation", "Form Handling", "Image Management", "Quiz", "Statistics with ChartJS", "Geolocation"];

  render() {
    return html`
      <nav class="top"><a>Accueil</a><a>About Me</a><a>Mes Projets</a><a>Déconnexion</a></nav>
      <aside class="side">
        <div class="brand">${capIcon}<span>Mon Portfolio</span></div>
        <div class="menu">
          <div class="entry">${homeIcon}<span>Accueil</span></div>
          <div class="entry">${folderIcon}<span>Mes Projets</span></div>
          <ul class="sub">${this.items.map((i) => html`<li><span class="dot"></span>${i}</li>`)}</ul>
          <div class="entry">${coderIcon}<span>À propos</span></div>
        </div>
      </aside>
      <main class="main">
        <h1 class="title">Géolocalisation</h1>
        <p class="lead">Carte Leaflet affichant les positions de géolocalisation des étudiants.</p>
        <student-map></student-map>
        <a class="back">Retour aux projets</a>
      </main>
      <footer class="foot">MST-RSI : Abdelmounim MOUADILI © 2024-2025</footer>
    `;
  }
}
